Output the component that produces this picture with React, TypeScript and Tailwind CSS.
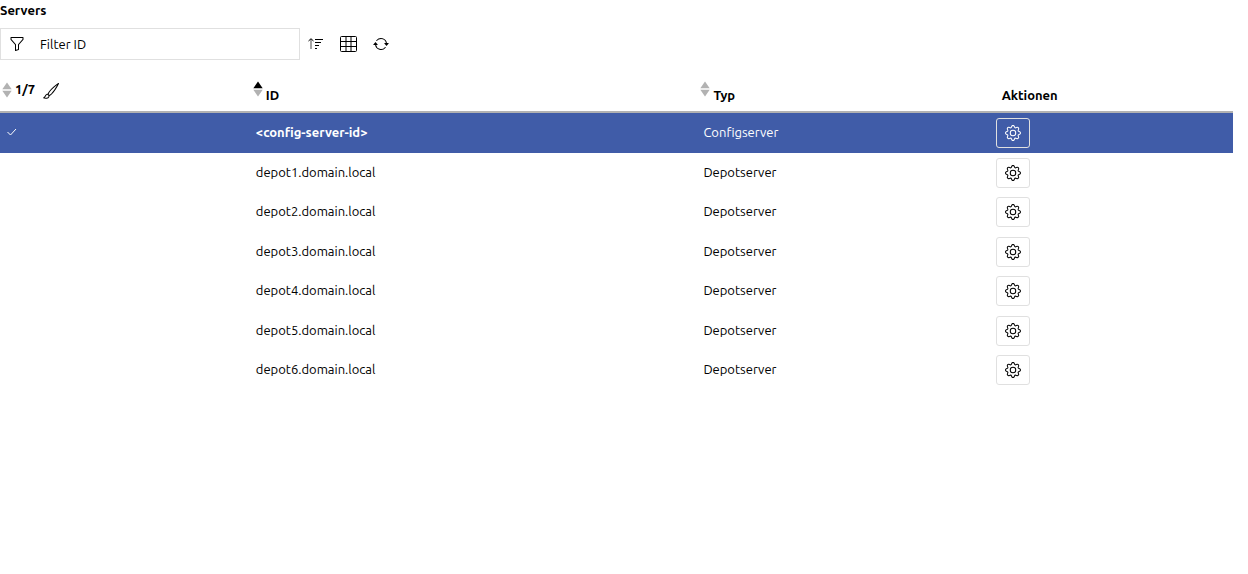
import { useState } from "react";
import { clsx } from "clsx";
import { BsArrowRepeat, BsBrush, BsFunnel, BsGear } from "react-icons/bs";

type Server = { id: string; type: string };

const servers: Server[] = [
  { id: "<config-server-id>", type: "Configserver" },
  { id: "depot1.domain.local", type: "Depotserver" },
  { id: "depot2.domain.local", type: "Depotserver" },
  { id: "depot3.domain.local", type: "Depotserver" },
  { id: "depot4.domain.local", type: "Depotserver" },
  { id: "depot5.domain.local", type: "Depotserver" },
  { id: "depot6.domain.local", type: "Depotserver" },
];

function SortArrows({ active = false }: { active?: boolean }) {
  return (
    <svg width="10" height="16" viewBox="0 0 10 16" className="shrink-0" aria-hidden="true">
      <path d="M5 0.5 9.7 7.3H.3z" fill={active ? "#000" : "#b2b2b2"} />
      <path d="M5 15.5.3 8.7h9.4z" fill="#b2b2b2" />
    </svg>
  );
}

function SortIcon() {
  return (
    <svg width="16" height="16" viewBox="0 0 16 16" fill="none" stroke="currentColor" aria-hidden="true">
      <path d="M3 13V3" strokeOpacity=".7" />
      <path d="M.5 5 3 2.7 5.5 5M7 3.5h8M7 6.5h6M7 9.5h4M7 12.5h2" />
    </svg>
  );
}

function GridIcon() {
  return (
    <svg width="17" height="16" viewBox="0 0 17 16" fill="none" stroke="currentColor" aria-hidden="true">
      <rect x=".5" y=".5" width="16" height="15" rx="1" />
      <path d="M6 .5v15M11 .5v15M.5 5.5h16M.5 10.5h16" />
    </svg>
  );
}

function CheckIcon() {
  return (
    <svg width="16" height="16" viewBox="0 0 16 16" fill="none" stroke="currentColor" role="img" aria-label="Ausgewählt">
      <path d="m3.5 8 3 3 5.5-6" />
    </svg>
  );
}

export default function App() {
  const [filter, setFilter] = useState("");
  const [selected, setSelected] = useState(servers[0].id);

  const rows = servers.filter((s) => s.id.includes(filter));

  return (
    <main className="pr-[15px] font-['Ubuntu','Noto_Sans',sans-serif] text-[13px] leading-5 text-black">
      <h1 className="font-semibold">Servers</h1>

      <div className="mt-2 flex items-center">
        <label className="flex h-8 w-[300px] items-center border border-[#e0e0e0] pl-2">
          <BsFunnel size={16} aria-hidden="true" />
          <input
            type="text"
            aria-label="Filter ID"
            placeholder="Filter ID"
            value={filter}
            onChange={(e) => setFilter(e.target.value)}
            className="ml-[15px] min-w-0 flex-1 outline-none placeholder:text-black placeholder:opacity-100"
          />
        </label>
        <div className="ml-2 flex items-center gap-4">
          <button type="button" aria-label="Sortieren">
            <SortIcon />
          </button>
          <button type="button" aria-label="Spalten">
            <GridIcon />
          </button>
          <button type="button" aria-label="Aktualisieren">
            <BsArrowRepeat size={16} />
          </button>
        </div>
      </div>

      <table className="mt-4 w-full table-fixed border-separate border-spacing-0 text-left">
        <thead>
          <tr className="h-[37px] align-top *:border-b-2 *:border-[#b2b2b2]">
            <th scope="col" className="w-[20.1%] pl-0.5 font-semibold">
              <span className="flex items-center gap-[3px] pt-[3px]">
                <SortArrows />
                <span className="pb-0.5">1/7</span>
                <button type="button" aria-label="Auswahl aufheben" className="ml-[5px] pt-0.5">
                  <BsBrush size={16} />
                </button>
              </span>
            </th>
            <th scope="col" aria-sort="ascending" className="w-[36.3%] pl-[5px] font-semibold">
              <button type="button" className="flex gap-[3px] pt-[5px]">
                <SortArrows active />
                <span className="pt-1">ID</span>
              </button>
            </th>
            <th scope="col" className="w-[23.7%] pl-[5px] font-semibold">
              <button type="button" className="flex gap-[3px] pt-[5px]">
                <SortArrows />
                <span className="pt-1">Typ</span>
              </button>
            </th>
            <th scope="col" className="pt-[9px] pl-3.5 font-semibold">
              Aktionen
            </th>
          </tr>
        </thead>
        <tbody>
          {rows.map((s) => {
            const active = s.id === selected;
            return (
              <tr
                key={s.id}
                aria-selected={active}
                onClick={() => setSelected(s.id)}
                className={clsx("odd:h-10 even:h-[39px]", active && "bg-[#405ca8] text-white")}
              >
                <td className="pb-0.5 pl-1">{active && <CheckIcon />}</td>
                <td className={clsx("pb-0.5 pl-2", active && "font-semibold")}>{s.id}</td>
                <td className="pb-0.5 pl-2">{s.type}</td>
                <td className="pl-2">
                  <button
                    type="button"
                    aria-label={`${s.id} konfigurieren`}
                    className="flex h-[30px] w-[34px] items-center justify-center rounded-[3px] border border-[#e0e0e0]"
                  >
                    <BsGear size={16} />
                  </button>
                </td>
              </tr>
            );
          })}
        </tbody>
      </table>
    </main>
  );
}
